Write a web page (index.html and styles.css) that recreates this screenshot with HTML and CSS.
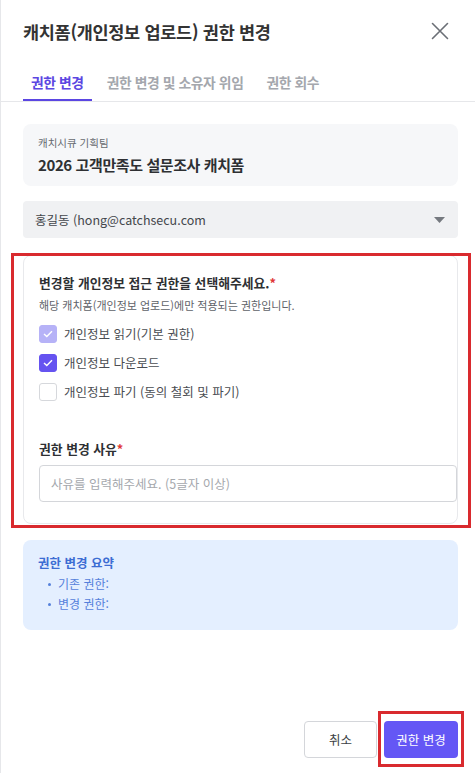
FILE: index.html
```html
<!DOCTYPE html>
<html lang="ko">
<head>
<meta charset="utf-8">
<link rel="stylesheet" href="styles.css">
</head>
<body>
<div class="drawer">
  <header class="head">
    <h1 class="title">캐치폼(개인정보 업로드) 권한 변경</h1>
    <button class="close" aria-label="닫기">
      <svg width="18" height="18" viewBox="0 0 18 18"><path d="M1.5 1.5L16.5 16.5M16.5 1.5L1.5 16.5" stroke="#6b6f76" stroke-width="1.6" fill="none" stroke-linecap="round"/></svg>
    </button>
  </header>
  <nav class="tabs">
    <span class="tab active">권한 변경</span>
    <span class="tab">권한 변경 및 소유자 위임</span>
    <span class="tab">권한 회수</span>
  </nav>
  <main class="body">
    <section class="info">
      <div class="info-team">캐치시큐 기획팀</div>
      <div class="info-name">2026 고객만족도 설문조사 캐치폼</div>
    </section>
    <div class="select">
      <span>홍길동 (hong@catchsecu.com</span>
      <svg width="11" height="6" viewBox="0 0 11 6"><path d="M0 0H11L5.5 6Z" fill="#75797f"/></svg>
    </div>
    <section class="card">
      <div class="heading">변경할 개인정보 접근 권한을 선택해주세요.<span class="req">*</span></div>
      <div class="sub">해당 캐치폼(개인정보 업로드)에만 적용되는 권한입니다.</div>
      <div class="checks">
        <label class="check"><span class="box disabled"><svg width="10" height="8" viewBox="0 0 10 8"><path d="M1 4L3.8 6.6L9 1.2" stroke="#fff" stroke-width="1.4" fill="none"/></svg></span>개인정보 읽기(기본 권한)</label>
        <label class="check"><span class="box on"><svg width="10" height="8" viewBox="0 0 10 8"><path d="M1 4L3.8 6.6L9 1.2" stroke="#fff" stroke-width="1.4" fill="none"/></svg></span>개인정보 다운로드</label>
        <label class="check"><span class="box"></span>개인정보 파기 (동의 철회 및 파기)</label>
      </div>
      <div class="heading reason">권한 변경 사유<span class="req">*</span></div>
      <div class="input">사유를 입력해주세요. (5글자 이상)</div>
    </section>
    <section class="summary">
      <div class="sum-title">권한 변경 요약</div>
      <ul class="sum-list">
        <li>기존 권한:</li>
        <li>변경 권한:</li>
      </ul>
    </section>
  </main>
  <footer class="foot">
    <button class="btn ghost">취소</button>
    <button class="btn primary">권한 변경</button>
  </footer>
</div>
<div class="mark mark-card"></div>
<div class="mark mark-btn"></div>
</body>
</html>
```

FILE: styles.css
```css
* { box-sizing: border-box; }
html, body { margin: 0; padding: 0; }
body {
  width: 475px;
  height: 773px;
  font-family: "Noto Sans CJK KR", "Noto Sans", sans-serif;
  color: #333;
  background: #fff;
  position: relative;
  overflow: hidden;
}
.drawer {
  height: 773px;
  border-left: 1px solid #e6e7ea;
  display: flex;
  flex-direction: column;
}
.head {
  height: 62px;
  display: flex;
  align-items: center;
  justify-content: space-between;
  padding: 0 26px 0 22px;
}
.title {
  margin: 0;
  font-size: 17.5px;
  font-weight: 700;
  color: #333;
  letter-spacing: -0.3px;
}
.close {
  border: 0;
  background: none;
  padding: 0;
  width: 18px;
  height: 18px;
  display: flex;
}
.tabs {
  display: flex;
  gap: 7px;
  padding: 0 0 0 22px;
  border-bottom: 1px solid #e6e7ea;
  height: 40px;
}
.tab {
  padding: 0 8px;
  font-size: 13.8px;
  font-weight: 700;
  color: #a4a7ad;
  line-height: 38px;
  margin-top: 1px;
  border-bottom: 2px solid transparent;
  letter-spacing: -0.4px;
}
.tab.active {
  color: #5b46e2;
  border-bottom-color: #5b46e2;
}
.body {
  flex: 1;
  padding: 22px 17px 0 22px;
  display: flex;
  flex-direction: column;
}
.info {
  background: #f6f7f9;
  border-radius: 8px;
  height: 62px;
  padding: 11px 15px 0;
}
.info-team {
  font-size: 10.5px;
  color: #666a70;
  line-height: 16px;
}
.info-name {
  font-size: 15px;
  font-weight: 700;
  color: #2e3033;
  line-height: 22px;
  margin-top: 3px;
  letter-spacing: -0.4px;
}
.select {
  margin-top: 15px;
  height: 37px;
  background: #f0f1f3;
  border-radius: 4px;
  display: flex;
  align-items: center;
  justify-content: space-between;
  padding: 0 13px 0 12px;
  font-size: 12.5px;
  color: #44474c;
}
.card {
  margin-top: 17px;
  border: 1px solid #e8e9ec;
  border-radius: 8px;
  padding: 18px 0 21px 15px;
  height: 269px;
}
.heading {
  font-size: 12.8px;
  font-weight: 700;
  color: #2e3033;
  line-height: 18px;
}
.req { color: #e0383b; }
.sub {
  margin-top: 5px;
  font-size: 11px;
  color: #5e6268;
  line-height: 17px;
}
.checks {
  margin-top: 11px;
  display: flex;
  flex-direction: column;
  gap: 11px;
}
.check {
  display: flex;
  align-items: center;
  gap: 7px;
  font-size: 12.5px;
  color: #4a4d52;
  line-height: 18px;
}
.box {
  width: 18px;
  height: 18px;
  border-radius: 3px;
  border: 1px solid #d6d8dc;
  background: #fff;
  display: flex;
  align-items: center;
  justify-content: center;
}
.box.on { background: #6553f0; border-color: #6553f0; }
.box.disabled { background: #b6b2f7; border-color: #b6b2f7; }
.reason { margin-top: 39px; }
.input {
  margin-top: 7px;
  height: 37px;
  border: 1px solid #d4d6da;
  border-radius: 4px;
  padding: 0 11px;
  display: flex;
  align-items: center;
  font-size: 12.5px;
  color: #a5a8ad;
}
.summary {
  margin-top: 16px;
  background: #e4efff;
  border-radius: 8px;
  height: 90px;
  padding: 14px 15px 0;
}
.sum-title {
  font-size: 12.5px;
  font-weight: 700;
  color: #3c6dd3;
  line-height: 18px;
}
.sum-list {
  margin: 2px 0 0;
  padding: 0 0 0 10px;
  list-style: none;
}
.sum-list li {
  font-size: 12px;
  color: #5681db;
  line-height: 20px;
  position: relative;
  padding-left: 10px;
}
.sum-list li::before {
  content: "";
  position: absolute;
  left: 0;
  top: 9px;
  width: 3px;
  height: 3px;
  border-radius: 50%;
  background: #5681db;
}
.foot {
  display: flex;
  justify-content: flex-end;
  gap: 7px;
  padding: 0 17px 15px 0;
}
.btn {
  height: 37px;
  border-radius: 4px;
  font-family: inherit;
  font-size: 12.5px;
  padding: 0;
}
.ghost {
  width: 73px;
  border: 1px solid #d4d6da;
  background: #fff;
  color: #3c3f44;
}
.primary {
  width: 74px;
  border: 0;
  background: #6457f5;
  color: #fff;
}
.mark {
  position: absolute;
  border: 3px solid #d92a2e;
  pointer-events: none;
}
.mark-card { left: 11px; top: 253px; width: 460px; height: 275px; }
.mark-btn { left: 378px; top: 711px; width: 86px; height: 56px; }
```
